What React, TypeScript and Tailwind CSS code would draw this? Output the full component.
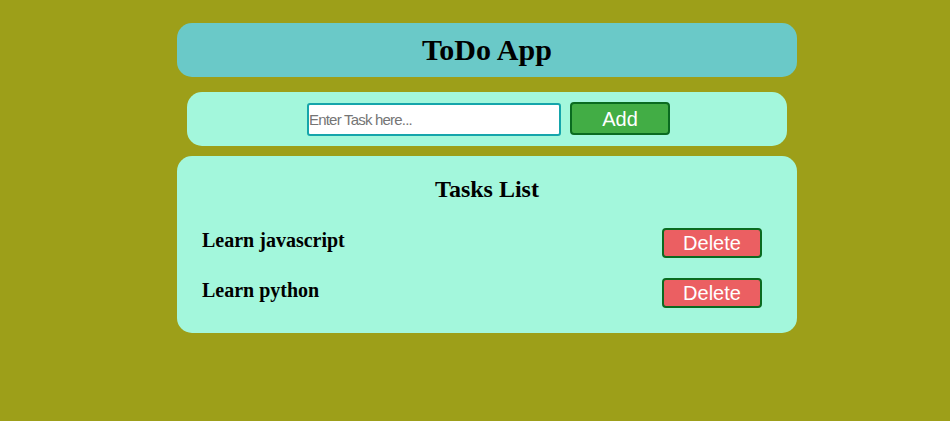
import React from "react";

export default function App() {
  const tasks = ["Learn javascript", "Learn python"];
  return (
    <div className="min-h-[421px] w-full bg-[#9d9f19] pt-[23px]" style={{ fontFamily: '"Liberation Serif", serif' }}>
      <div className="ml-[177px] flex w-[620px] flex-col">
        <div className="flex h-[54px] items-center justify-center rounded-[15px] bg-[#6ac9c8]">
          <h1 className="text-[30px] font-bold leading-none text-black">ToDo App</h1>
        </div>
        <div className="mx-[10px] mt-[15px] flex h-[54px] items-center justify-center gap-[9px] rounded-[15px] bg-[#a3f7dc] pl-[3px]">
          <input
            placeholder="Enter Task here..."
            className="h-[33px] w-[254px] rounded-[3px] border-2 border-[#15a5ab] bg-white px-0 text-[15px] tracking-[-0.8px] text-black outline-none placeholder:text-[#757575]"
            style={{ fontFamily: '"Liberation Sans", Arial, sans-serif' }}
          />
          <button
            className="mb-[1px] h-[33px] w-[100px] rounded-[4px] border-2 border-[#0a6b20] bg-[#42ad45] text-[20px] leading-none text-white"
            style={{ fontFamily: '"Liberation Sans", Arial, sans-serif' }}
          >
            Add
          </button>
        </div>
        <div className="mt-[10px] flex h-[177px] flex-col rounded-[15px] bg-[#a3f7dc] px-[25px] pt-[19px]">
          <h2 className="text-center text-[24px] font-bold leading-[28px] text-black">Tasks List</h2>
          <div className="mt-[25px] flex flex-col gap-[20px]">
            {tasks.map((t) => (
              <div key={t} className="flex h-[30px] items-center justify-between pr-[10px]">
                <span className="mb-[7px] text-[20px] font-bold leading-none text-black">{t}</span>
                <button
                  className="h-[30px] w-[100px] rounded-[4px] border-2 border-[#0a6b20] bg-[#eb5f62] text-[20px] leading-none text-white"
                  style={{ fontFamily: '"Liberation Sans", Arial, sans-serif' }}
                >
                  Delete
                </button>
              </div>
            ))}
          </div>
        </div>
      </div>
    </div>
  );
}
